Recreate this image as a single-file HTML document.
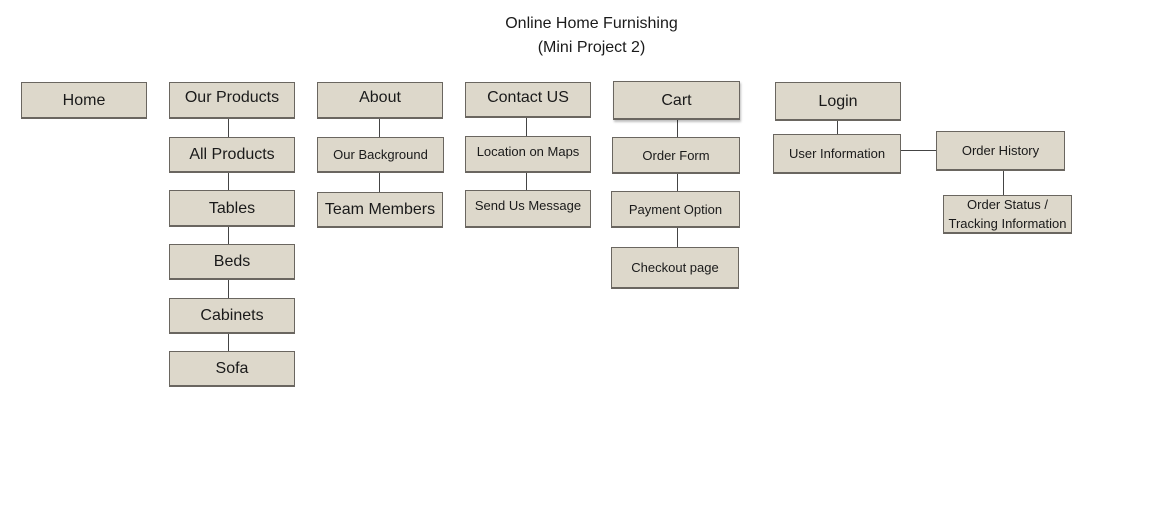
<!DOCTYPE html>
<html><head><meta charset="utf-8"><style>
body{margin:0;width:1167px;height:532px;background:#fff;position:relative;overflow:hidden;font-family:"Liberation Sans",sans-serif;color:#1a1a1a}
.b{position:absolute;box-sizing:border-box;background:#ddd8cb;border:1px solid #6a6660;border-bottom-width:2px;display:flex;align-items:center;justify-content:center;text-align:center;font-size:16px;white-space:nowrap;line-height:19px}
.s{font-size:13px}
.l{position:absolute;background:#444}
.t{position:absolute;left:0;width:1183px;text-align:center;font-size:16px;line-height:24px}
</style></head><body>
<div class="t" style="top:12px">Online Home Furnishing</div>
<div class="t" style="top:36px">(Mini Project 2)</div>

<div class="l" style="left:228px;top:118px;width:1px;height:234px"></div>
<div class="l" style="left:379px;top:118px;width:1px;height:74px"></div>
<div class="l" style="left:526px;top:117px;width:1px;height:74px"></div>
<div class="l" style="left:677px;top:119px;width:1px;height:130px"></div>
<div class="l" style="left:837px;top:120px;width:1px;height:15px"></div>
<div class="l" style="left:900px;top:150px;width:37px;height:1px"></div>
<div class="l" style="left:1003px;top:170px;width:1px;height:25px"></div>

<div class="b" style="left:21px;top:82px;width:126px;height:37px">Home</div>
<div class="b" style="left:169px;top:82px;width:126px;height:37px;padding-bottom:5px">Our Products</div>
<div class="b" style="left:169px;top:137px;width:126px;height:36px">All Products</div>
<div class="b" style="left:169px;top:190px;width:126px;height:37px">Tables</div>
<div class="b" style="left:169px;top:244px;width:126px;height:36px">Beds</div>
<div class="b" style="left:169px;top:298px;width:126px;height:36px">Cabinets</div>
<div class="b" style="left:169px;top:351px;width:126px;height:36px">Sofa</div>

<div class="b" style="left:317px;top:82px;width:126px;height:37px;padding-bottom:5px">About</div>
<div class="b s" style="left:317px;top:137px;width:127px;height:36px">Our Background</div>
<div class="b" style="left:317px;top:192px;width:126px;height:36px">Team Members</div>

<div class="b" style="left:465px;top:82px;width:126px;height:36px;padding-bottom:5px">Contact US</div>
<div class="b s" style="left:465px;top:136px;width:126px;height:37px;padding-bottom:6px">Location on Maps</div>
<div class="b s" style="left:465px;top:190px;width:126px;height:38px;padding-bottom:6px">Send Us Message</div>

<div class="b" style="left:613px;top:81px;width:127px;height:39px;box-shadow:1px 2px 2px rgba(0,0,0,.25)">Cart</div>
<div class="b s" style="left:612px;top:137px;width:128px;height:37px">Order Form</div>
<div class="b s" style="left:611px;top:191px;width:129px;height:37px">Payment Option</div>
<div class="b s" style="left:611px;top:247px;width:128px;height:42px">Checkout page</div>

<div class="b" style="left:775px;top:82px;width:126px;height:39px">Login</div>
<div class="b s" style="left:773px;top:134px;width:128px;height:40px">User Information</div>
<div class="b s" style="left:936px;top:131px;width:129px;height:40px">Order History</div>
<div class="b s" style="left:943px;top:195px;width:129px;height:39px;white-space:normal;line-height:19px;overflow:visible"><span style="display:block;width:140px;margin-left:0">Order Status /<br>Tracking Information</span></div>
</body></html>
